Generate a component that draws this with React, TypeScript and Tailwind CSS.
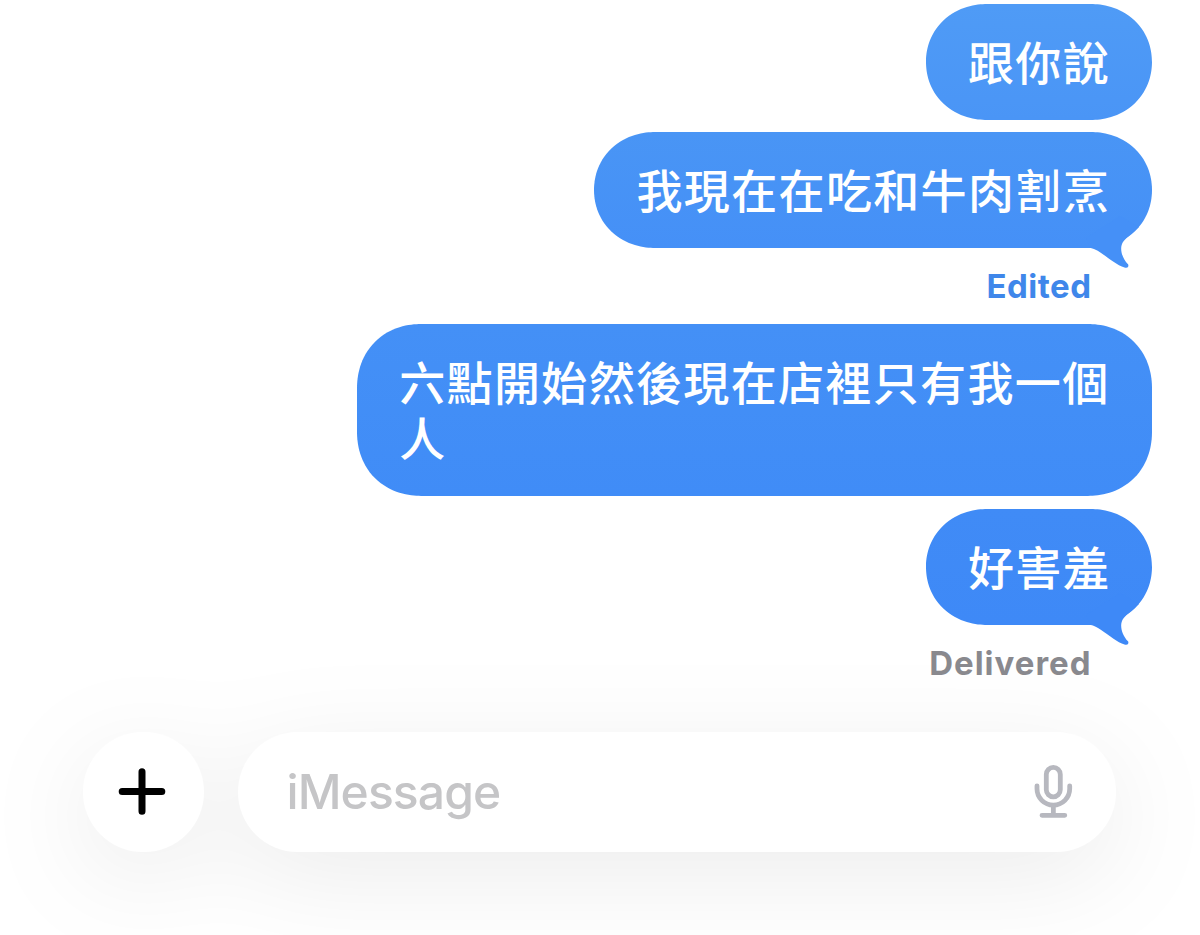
import type { ReactNode } from "react";

type BubbleProps = {
  children: ReactNode;
  fill: string;
  shape?: string;
  tailColor?: string;
};

function Tail({ color }: { color: string }) {
  return (
    <svg
      className="absolute -bottom-5 right-0 h-[60px] w-[72px]"
      viewBox="0 0 72 60"
      fill={color}
      aria-hidden="true"
    >
      <path d="M6 30L10 39.8C18 41.5 24 47.5 33.5 53.7C37 56 41 58.6 44.5 59.5Q49.3 60.5 48.2 56.6C43 51 41 45 41.2 40C41.5 35 44 32.5 46.5 30C50 26.5 54 24 59 19L40 8Z" />
    </svg>
  );
}

function Bubble({
  children,
  fill,
  shape = "rounded-[61px/58px] [corner-shape:superellipse(1.05)]",
  tailColor,
}: BubbleProps) {
  return (
    <div className={`relative w-fit max-w-[794.5px] pr-[43.5px] pl-[42.25px] pt-[31px] pb-[29px] ${shape} ${fill}`}>
      {tailColor && <Tail color={tailColor} />}
      <p className="relative -mr-[2px] text-[46px] leading-[56px] font-medium tracking-[1.35px] text-white">
        {children}
      </p>
    </div>
  );
}

function PlusIcon() {
  return (
    <svg className="mr-[2px] size-12" viewBox="0 0 48 48" fill="none" stroke="#000" strokeWidth="7" strokeLinecap="round" aria-hidden="true">
      <path d="M24 3.7V43.3M4.2 23.5H43.8" />
    </svg>
  );
}

function MicIcon() {
  return (
    <svg className="h-14 w-10" viewBox="0 0 40 56" fill="none" stroke="#b7b8bf" strokeWidth="4.8" strokeLinecap="round" aria-hidden="true">
      <rect x="13.3" y="3.4" width="14" height="29.4" rx="7" />
      <path d="M4 21.8V24.8A16.35 16.35 0 0 0 36.7 24.8V21.8" />
      <path d="M20.35 41.5V51M9 51.3H31.8" />
    </svg>
  );
}

export default function App() {
  return (
    <main className="flex h-[935px] w-[1200px] flex-col overflow-hidden bg-white font-['Inter','Noto_Sans_CJK_TC',sans-serif]">
      <section className="relative z-10 flex flex-col items-end pt-1 pr-[48.5px]">
        <Bubble fill="bg-linear-to-b from-[#4f9bf6] to-[#4a95f6]">跟你說</Bubble>
        <div className="mt-3">
          <Bubble fill="bg-linear-to-b from-[#4995f5] to-[#4590f7]" tailColor="#4590f7">
            我現在在吃和牛肉割烹
          </Bubble>
        </div>
        <p className="mt-[22px] mr-[60px] text-[33px] leading-8 font-bold tracking-[0.5px] text-[#3f87ea]">Edited</p>
        <div className="mt-[22px]">
          <Bubble
            fill="bg-linear-to-b from-[#4490f6] to-[#408cf7]"
            shape="rounded-[64px] [corner-shape:superellipse(1.08)]"
          >
            六點開始然後現在店裡只有我一個人
          </Bubble>
        </div>
        <div className="mt-[13px]">
          <Bubble fill="bg-linear-to-b from-[#408bf6] to-[#3e89f7]" tailColor="#3e89f7">
            好害羞
          </Bubble>
        </div>
        <p className="mt-[22px] mr-[60px] text-[33px] leading-8 font-bold tracking-[1px] text-[#89898e]">Delivered</p>
      </section>

      <footer className="mt-[52.5px] flex gap-[34.5px] pl-[83px] [filter:drop-shadow(0_24px_50px_rgba(0,0,0,0.075))]">
        <button
          aria-label="Add attachment"
          className="flex size-[120.5px] items-center justify-center rounded-full bg-white"
        >
          <PlusIcon />
        </button>
        <div className="flex h-[120.5px] w-[878px] items-center justify-between rounded-full bg-white pr-[43.5px] pl-[48.5px]">
          <span className="text-[48px] leading-none font-medium tracking-[-0.9px] text-[#c5c5c7]">iMessage</span>
          <MicIcon />
        </div>
      </footer>
    </main>
  );
}
